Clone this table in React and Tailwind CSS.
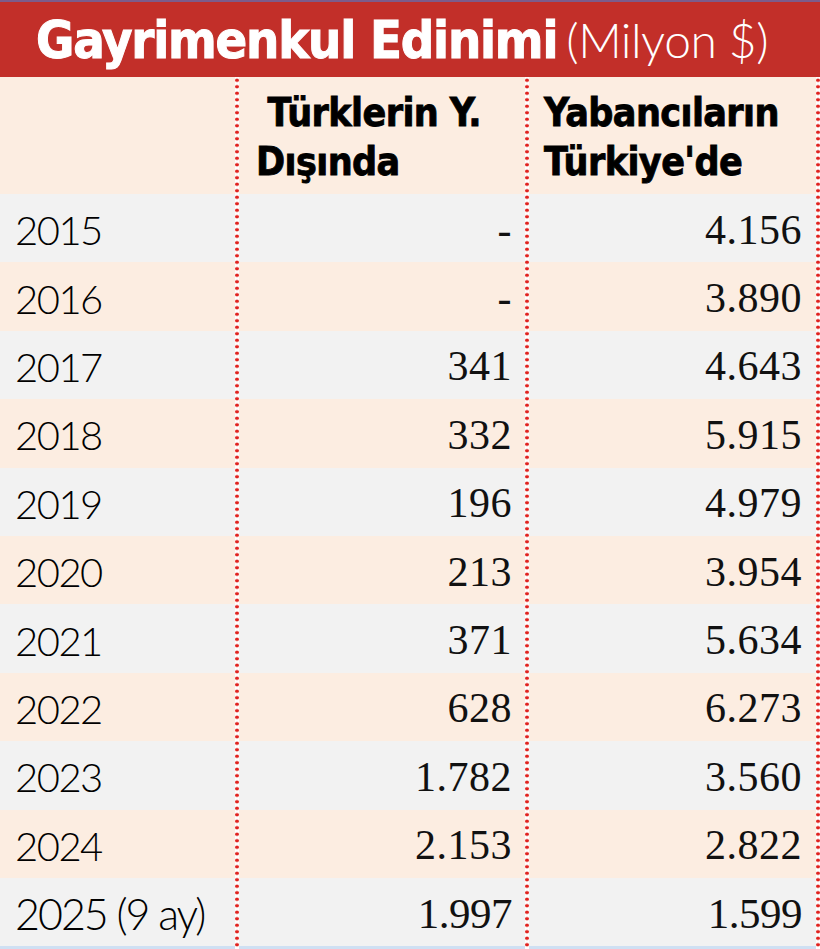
const rows = [
  ["2015", "-", "4.156"],
  ["2016", "-", "3.890"],
  ["2017", "341", "4.643"],
  ["2018", "332", "5.915"],
  ["2019", "196", "4.979"],
  ["2020", "213", "3.954"],
  ["2021", "371", "5.634"],
  ["2022", "628", "6.273"],
  ["2023", "1.782", "3.560"],
  ["2024", "2.153", "2.822"],
  ["2025 (9 ay)", "1.997", "1.599"],
]

const cond = "font-['DejaVu_Sans_Condensed','DejaVu_Sans',sans-serif] font-stretch-condensed font-bold"
const dots = "absolute top-[77px] bottom-0 w-[4px] bg-white bg-[radial-gradient(circle,#e0231f_1.6px,transparent_2px)] bg-[length:4px_6.5px] bg-repeat-y"

export default function App() {
  return (
    <div className="relative w-[820px] h-[949px] overflow-hidden bg-white">
      <div className="h-[2px] bg-[#7c5c8b]" />
      <div className="h-[75px] bg-[#c22f29] flex items-center pl-[36px] text-white">
        <span className={`${cond} text-[52px] tracking-[-1.2px] [-webkit-text-stroke:1px_white]`}>Gayrimenkul Edinimi</span>
        <span className="font-['Lato',sans-serif] font-light text-[48px] ml-[9px] tracking-[-0.5px]">(Milyon $)</span>
      </div>

      <div className={`grid grid-cols-[237px_290px_1fr] h-[117px] bg-[#fcede1] text-black ${cond} text-[39px] leading-[49px] tracking-[-0.6px] [-webkit-text-stroke:0.8px_black]`}>
        <div />
        <div className="pl-[19px] pt-[11px] whitespace-pre"> Türklerin Y.{"\n"}Dışında</div>
        <div className="pl-[17px] pt-[11px] whitespace-pre">Yabancıların{"\n"}Türkiye'de</div>
      </div>

      {rows.map(([year, a, b], i) => {
        const last = i === rows.length - 1
        const num = last
          ? "font-['Liberation_Serif',serif] text-[43px] tracking-[-0.5px]"
          : "font-['Liberation_Serif',serif] text-[42px] tracking-[0.5px]"
        return (
          <div
            key={year}
            className={`grid grid-cols-[237px_290px_1fr] h-[68.4px] items-center text-[#111] ${i % 2 ? "bg-[#fcede1]" : "bg-[#f2f2f2]"}`}
          >
            <div
              className={`pl-[15px] pt-[4px] font-['Lato',sans-serif] font-light text-black ${last ? "text-[43px] tracking-[-2px]" : "text-[40px] tracking-[-1.5px]"}`}
            >
              {year}
            </div>
            <div className={`text-right pr-[15px] pt-[4px] ${num}`}>{a}</div>
            <div className={`text-right pr-[18px] pt-[4px] ${num}`}>{b}</div>
          </div>
        )
      })}

      <div className="h-[3px] bg-[#cfe0f3]" />

      <div className={`${dots} left-[235px]`} />
      <div className={`${dots} left-[525px]`} />
      <div className={`${dots} left-[816px]`} />
    </div>
  )
}
